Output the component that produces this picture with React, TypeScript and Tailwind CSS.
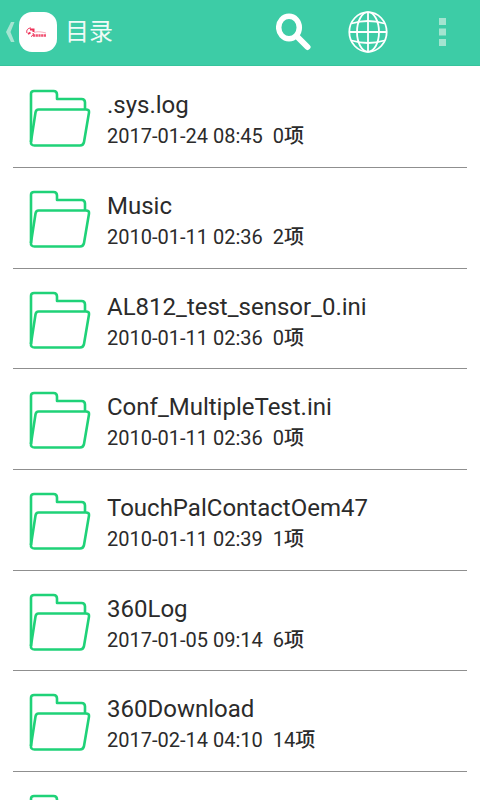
import React from "react";

/* ------------------------------------------------------------------ */
/*  Data                                                              */
/* ------------------------------------------------------------------ */

interface Entry {
  name: string;
  date: string;
  count: number;
}

const ENTRIES: Entry[] = [
  { name: ".sys.log", date: "2017-01-24 08:45", count: 0 },
  { name: "Music", date: "2010-01-11 02:36", count: 2 },
  { name: "AL812_test_sensor_0.ini", date: "2010-01-11 02:36", count: 0 },
  { name: "Conf_MultipleTest.ini", date: "2010-01-11 02:36", count: 0 },
  { name: "TouchPalContactOem47", date: "2010-01-11 02:39", count: 1 },
  { name: "360Log", date: "2017-01-05 09:14", count: 6 },
  { name: "360Download", date: "2017-02-14 04:10", count: 14 },
  { name: "systemsload", date: "2017-02-14 04:10", count: 1 },
];

/* ------------------------------------------------------------------ */
/*  Icons                                                             */
/* ------------------------------------------------------------------ */

function BackIcon() {
  return (
    <svg className="w-2.5 h-5" viewBox="0 0 10 20" fill="#a6e5d2">
      <path d="M6 0h3.500L5.500 10l4 10H6L1 10z" />
    </svg>
  );
}

function AppLogo() {
  return (
    <svg className="w-[38px] h-10" viewBox="0 0 38 40">
      <rect width="38" height="40" rx="13" fill="#fff" />
      <g fill="none" stroke="#ee3158">
        <path d="M8 21c-1-3 1-5 4-5" strokeWidth="1" />
        <path d="M11 17.500h3.500v2.500M9 22l2.500-1.500" strokeWidth="2" />
        <path d="M14 21c1 1.500-0.500 3-2 3.500" strokeWidth="1" />
        <path d="M15 20.500c4-1.500 8-0.500 12 0.500" strokeWidth="0.800" opacity="0.500" />
        <path d="M14 23.500h13" strokeWidth="2.600" strokeDasharray="2.200 0.500" opacity="0.850" />
      </g>
    </svg>
  );
}

function SearchIcon() {
  return (
    <svg className="w-9 h-[38px]" viewBox="0 0 36 38" fill="none" stroke="#fff">
      <ellipse cx="13" cy="14.500" rx="10.300" ry="11.300" strokeWidth="5.500" />
      <path d="M20.500 23l11 11" strokeWidth="6" strokeLinecap="round" />
    </svg>
  );
}

function GlobeIcon() {
  return (
    <svg className="w-10 h-[42px]" viewBox="0 0 40 42" fill="none" stroke="#fff" strokeWidth="1.800">
      <ellipse cx="20" cy="21" rx="18.700" ry="19.800" />
      <ellipse cx="20" cy="21" rx="11" ry="19.800" />
      <path d="M20 1v40M1 21h38" />
      <path d="M3.500 12.500c10-3 23-3 33 0M3.500 29.500c10 3 23 3 33 0" />
    </svg>
  );
}

function MoreIcon() {
  return (
    <svg className="w-[7px] h-7" viewBox="0 0 7 28" fill="#a3e4d0">
      <rect width="7" height="7" />
      <rect y="10.500" width="7" height="7" />
      <rect y="21" width="7" height="7" />
    </svg>
  );
}

function FolderIcon() {
  return (
    <svg
      className="w-[62px] h-[58px] shrink-0"
      viewBox="0 0 62 58"
      fill="none"
      stroke="#1fd278"
      strokeWidth="2.600"
      strokeLinejoin="round"
    >
      <path d="M2 53V5q0-3 3-3H24.500q3.500 0 3.500 3.500V10H52.500q3.500 0 3.500 3.500V20" />
      <path d="M9.500 20.500H57q3.500 0 3 3L55 53q-0.600 3.500-4 3.500H5.500q-4 0-3.500-4L6.500 23.500q0.500-3 3-3z" />
    </svg>
  );
}

/* ------------------------------------------------------------------ */
/*  Page                                                              */
/* ------------------------------------------------------------------ */

function EntryRow({ entry }: { entry: Entry }) {
  return (
    <li className="h-[101px] nth-[3n]:h-[100px] border-b border-[#8f8f8f]">
      <a href="#" className="flex items-center h-full pt-0.5 pl-4 gap-4">
        <FolderIcon />
        <div className="min-w-0 pt-1 text-[#2b2b2b] whitespace-nowrap">
          <div className="text-2xl leading-8">{entry.name}</div>
          <div className="text-xl leading-[30px] whitespace-pre">
            {`${entry.date}  ${entry.count}`}
            <span className="font-medium">项</span>
          </div>
        </div>
      </a>
    </li>
  );
}

export default function App() {
  return (
    <div className="h-screen overflow-hidden bg-white font-[Roboto,'Noto_Sans_CJK_SC',sans-serif]">
      <header className="flex items-center h-[66px] pb-0.5 pl-[5px] pr-[34px] bg-[#3dcca6] border-b border-[#36c49c]">
        <button type="button" aria-label="返回" className="flex items-center gap-1">
          <BackIcon />
          <AppLogo />
        </button>
        <h1 className="ml-2 text-2xl text-[#f0fbf7]">目录</h1>
        <div className="ml-auto flex items-center">
          <button type="button" aria-label="搜索" className="mr-9">
            <SearchIcon />
          </button>
          <button type="button" aria-label="网络" className="mr-[51px]">
            <GlobeIcon />
          </button>
          <button type="button" aria-label="更多">
            <MoreIcon />
          </button>
        </div>
      </header>
      <ul className="mx-[13px] pt-px">
        {ENTRIES.map((entry) => (
          <EntryRow key={entry.name} entry={entry} />
        ))}
      </ul>
    </div>
  );
}
